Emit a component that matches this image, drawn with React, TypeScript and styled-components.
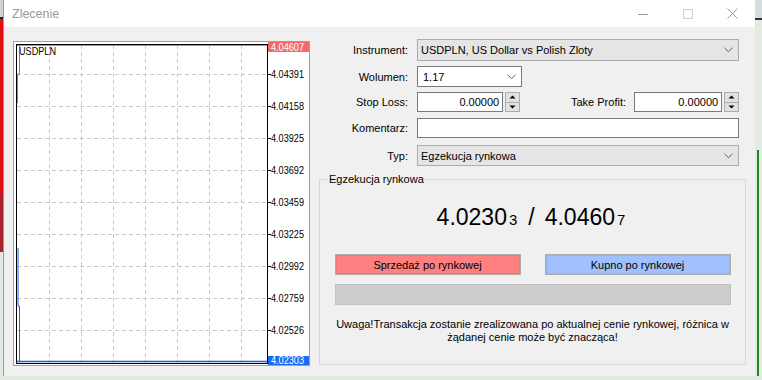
import styled, { createGlobalStyle } from "styled-components";

const GlobalStyle = createGlobalStyle`
  html, body {
    margin: 0;
    padding: 0;
  }
  body {
    width: 762px;
    height: 380px;
    overflow: hidden;
    background: #dfe7df;
    font-family: "Liberation Sans", Arial, sans-serif;
    font-size: 11px;
    color: #000;
  }
`;

const Screen = styled.div`
  width: 762px;
  height: 380px;
  display: flex;
  flex-direction: column;
`;

const Top = styled.div`
  display: flex;
  height: 376px;
`;

const LeftStrip = styled.div`
  width: 4px;
  background: linear-gradient(
    to bottom,
    #cfd3d6 0,
    #cfd3d6 17px,
    #222 17px,
    #222 19px,
    #e01010 19px,
    #e01010 193px,
    #a8222c 193px,
    #a8222c 252px,
    #e1eae1 252px
  );
`;

const RightStrip = styled.div`
  flex: 1;
  background: linear-gradient(
    to bottom,
    #d4dde2 0,
    #d4dde2 18px,
    #333 18px,
    #333 20px,
    #e3ece3 20px
  );
  position: relative;
  &::after {
    content: "";
    position: absolute;
    left: 2px;
    top: 150px;
    bottom: 0;
    width: 2px;
    background: #1b8a1b;
  }
`;

const BottomStrip = styled.div`
  height: 4px;
  background: #e0e8e0;
`;

const Window = styled.div`
  width: 751px;
  display: flex;
  flex-direction: column;
  background: #f0f0f0;
  box-shadow: -1px 0 0 #9a9a9a, 0 1px 0 #b8b8b8;
`;

const TitleBar = styled.div`
  height: 27px;
  background: #fff;
  display: flex;
  align-items: center;
  padding-left: 8px;
`;

const Title = styled.span`
  font-size: 12.5px;
  color: #999;
  flex: 1;
`;

const WinButton = styled.div`
  width: 45px;
  height: 27px;
  display: flex;
  align-items: center;
  justify-content: center;
`;

const Body = styled.div`
  display: flex;
  align-items: flex-start;
  padding: 12px 9px 0 9px;
`;

const ChartBox = styled.div`
  width: 295px;
  height: 323px;
  margin-top: 2px;
  border: 1px solid #a0a0a0;
  background: #fff;
  flex-shrink: 0;
  overflow: hidden;
`;

const Panel = styled.div`
  width: 428px;
  margin-left: 8px;
  display: flex;
  flex-direction: column;
`;

const Row = styled.div<{ $h: number; $mt: number }>`
  display: flex;
  align-items: center;
  height: ${(p) => p.$h}px;
  margin-top: ${(p) => p.$mt}px;
  padding-right: 7px;
`;

const Label = styled.span<{ $w?: number; $mr?: number }>`
  width: ${(p) => p.$w ?? 90}px;
  margin-right: ${(p) => p.$mr ?? 9}px;
  text-align: right;
  flex-shrink: 0;
`;

const Select = styled.div<{ $white?: boolean; $w?: number }>`
  box-sizing: border-box;
  height: 100%;
  ${(p) => (p.$w ? `width: ${p.$w}px;` : "flex: 1;")}
  display: flex;
  align-items: center;
  justify-content: space-between;
  padding: 0 5px 0 ${(p) => (p.$white ? 5 : 3)}px;
  background: ${(p) => (p.$white ? "#fff" : "#e5e5e5")};
  border: 1px solid ${(p) => (p.$white ? "#7a7a7a" : "#adadad")};
`;

const TextBox = styled.div<{ $w?: number }>`
  box-sizing: border-box;
  height: 100%;
  ${(p) => (p.$w ? `width: ${p.$w}px;` : "flex: 1;")}
  display: flex;
  align-items: center;
  justify-content: flex-end;
  padding-right: 3px;
  background: #fff;
  border: 1px solid #7a7a7a;
`;

const Spin = styled.div`
  box-sizing: border-box;
  width: 15px;
  height: 100%;
  margin-left: 2px;
  display: flex;
  flex-direction: column;
  border: 1px solid #adadad;
  background: #e1e1e1;
`;

const SpinHalf = styled.div<{ $top?: boolean }>`
  flex: 1;
  display: flex;
  align-items: center;
  justify-content: center;
  border-bottom: ${(p) => (p.$top ? "1px solid #adadad" : "none")};
`;

const GroupBox = styled.fieldset`
  box-sizing: border-box;
  margin: 6px 0 0 1px;
  padding: 0 15px;
  width: 427px;
  min-width: 0;
  height: 193px;
  border: 1px solid #d9d9d9;
  display: flex;
  flex-direction: column;
  align-items: center;
`;

const Legend = styled.legend`
  margin-left: -7px;
  padding: 0 1px;
  line-height: 14px;
`;

const Price = styled.div`
  margin-top: 17px;
  height: 28px;
  line-height: 28px;
  font-size: 23px;
  white-space: nowrap;
`;

const Small = styled.span`
  font-size: 15px;
  margin: 0 3px 0 2px;
`;

const Sep = styled.span`
  margin: 0 10px 0 8px;
`;

const Buttons = styled.div`
  display: flex;
  gap: 24px;
  margin-top: 23px;
`;

const TradeButton = styled.div<{ $bg: string; $edge: string }>`
  box-sizing: border-box;
  width: 186px;
  height: 21px;
  display: flex;
  align-items: center;
  justify-content: center;
  background: ${(p) => p.$bg};
  border: 1px solid #adadad;
  box-shadow: inset 0 0 0 1px ${(p) => p.$edge};
`;

const Progress = styled.div`
  box-sizing: border-box;
  width: 396px;
  height: 21px;
  margin-top: 9px;
  background: #cccccc;
  border: 1px solid #c2c2c2;
`;

const Warning = styled.div`
  width: 412px;
  flex-shrink: 0;
  margin-top: 13px;
  text-align: center;
  line-height: 13px;
`;

const Chevron = () => (
  <svg width="9" height="6" viewBox="0 0 9 6">
    <polyline points="0.5,0.8 4.5,4.6 8.5,0.8" fill="none" stroke="#606060" strokeWidth="1" />
  </svg>
);

const Arrow = ({ up }: { up?: boolean }) => (
  <svg width="7" height="4" viewBox="0 0 7 4">
    <polygon points={up ? "0.5,3.5 3.5,0.5 6.5,3.5" : "0.5,0.5 3.5,3.5 6.5,0.5"} fill="#000" />
  </svg>
);

const SpinButtons = () => (
  <Spin>
    <SpinHalf $top>
      <Arrow up />
    </SpinHalf>
    <SpinHalf>
      <Arrow />
    </SpinHalf>
  </Spin>
);

const vGrid = [35, 67, 99, 131, 163, 195, 227];
const hGrid = [
  { y: 32, v: "4.04391" },
  { y: 64, v: "4.04158" },
  { y: 96, v: "4.03925" },
  { y: 128, v: "4.03692" },
  { y: 160, v: "4.03459" },
  { y: 192, v: "4.03225" },
  { y: 224, v: "4.02992" },
  { y: 256, v: "4.02759" },
  { y: 288, v: "4.02526" },
];

const Chart = () => (
  <svg width="295" height="323" viewBox="0 0 295 323" fontFamily="Liberation Sans, Arial, sans-serif" fontSize="10.5">
    {vGrid.map((x) => (
      <line key={x} x1={x + 0.5} y1={3} x2={x + 0.5} y2={321} stroke="#c8c8c8" strokeDasharray="4 3" />
    ))}
    {hGrid.map((g) => (
      <g key={g.y}>
        <line x1={3} y1={g.y + 0.5} x2={253} y2={g.y + 0.5} stroke="#c8c8c8" strokeDasharray="4 3" />
        <line x1={254} y1={g.y + 0.5} x2={257} y2={g.y + 0.5} stroke="#000" />
        <text x={257} y={g.y + 4} textLength={33} lengthAdjust="spacingAndGlyphs">
          {g.v}
        </text>
      </g>
    ))}
    <line x1={254} y1={320.5} x2={257} y2={320.5} stroke="#000" />
    <line x1={3} y1={3.5} x2={253} y2={3.5} stroke="#ff7070" />
    <polyline points="5.5,3 5.5,32 3.5,32 3.5,61" fill="none" stroke="#ff5050" />
    <line x1={3} y1={319.5} x2={253} y2={319.5} stroke="#1560f0" strokeWidth="1.5" />
    <polyline points="4,206 4,264 5.5,264 5.5,320" fill="none" stroke="#1560f0" />
    <rect x={2.5} y={2.5} width={251} height={319} fill="none" stroke="#000" />
    <text x={5} y={13} textLength={37} lengthAdjust="spacingAndGlyphs">
      USDPLN
    </text>
    <rect x={254} y={0} width={41} height={10} fill="#f46a6a" />
    <text x={257} y={9} fill="#fff" textLength={33} lengthAdjust="spacingAndGlyphs">
      4.04607
    </text>
    <rect x={254} y={314} width={41} height={9} fill="#1a6cf5" />
    <text x={257} y={322} fill="#fff" fontSize="10" textLength={33} lengthAdjust="spacingAndGlyphs">
      4.02303
    </text>
  </svg>
);

export default function App() {
  return (
    <>
      <GlobalStyle />
      <Screen>
        <Top>
          <LeftStrip />
          <Window>
            <TitleBar>
              <Title>Zlecenie</Title>
              <WinButton>
                <svg width="10" height="10" viewBox="0 0 10 10">
                  <line x1="0" y1="5.5" x2="10" y2="5.5" stroke="#999" />
                </svg>
              </WinButton>
              <WinButton>
                <svg width="10" height="10" viewBox="0 0 10 10">
                  <rect x="0.5" y="0.5" width="9" height="9" fill="none" stroke="#d0d0d0" />
                </svg>
              </WinButton>
              <WinButton>
                <svg width="11" height="11" viewBox="0 0 11 11">
                  <path d="M0.5 0.5 L10.5 10.5 M10.5 0.5 L0.5 10.5" stroke="#999" />
                </svg>
              </WinButton>
            </TitleBar>
            <Body>
              <ChartBox>
                <Chart />
              </ChartBox>
              <Panel>
                <Row $h={22} $mt={0}>
                  <Label>Instrument:</Label>
                  <Select>
                    <span>USDPLN, US Dollar vs Polish Zloty</span>
                    <Chevron />
                  </Select>
                </Row>
                <Row $h={21} $mt={5}>
                  <Label>Wolumen:</Label>
                  <Select $white $w={105}>
                    <span>1.17</span>
                    <Chevron />
                  </Select>
                </Row>
                <Row $h={20} $mt={5}>
                  <Label>Stop Loss:</Label>
                  <TextBox $w={87}>0.00000</TextBox>
                  <SpinButtons />
                  <Label $w={106} $mr={8}>
                    Take Profit:
                  </Label>
                  <TextBox $w={89}>0.00000</TextBox>
                  <SpinButtons />
                </Row>
                <Row $h={20} $mt={6}>
                  <Label>Komentarz:</Label>
                  <TextBox />
                </Row>
                <Row $h={21} $mt={7}>
                  <Label>Typ:</Label>
                  <Select>
                    <span>Egzekucja rynkowa</span>
                    <Chevron />
                  </Select>
                </Row>
                <GroupBox>
                  <Legend>Egzekucja rynkowa</Legend>
                  <Price>
                    4.0230<Small>3</Small>
                    <Sep>/</Sep>4.0460<Small>7</Small>
                  </Price>
                  <Buttons>
                    <TradeButton $bg="#ff8080" $edge="#f47474">
                      Sprzedaż po rynkowej
                    </TradeButton>
                    <TradeButton $bg="#a0c0ff" $edge="#93b4f5">
                      Kupno po rynkowej
                    </TradeButton>
                  </Buttons>
                  <Progress />
                  <Warning>
                    Uwaga!Transakcja zostanie zrealizowana po aktualnej cenie rynkowej, różnica w żądanej cenie
                    może być znacząca!
                  </Warning>
                </GroupBox>
              </Panel>
            </Body>
          </Window>
          <RightStrip />
        </Top>
        <BottomStrip />
      </Screen>
    </>
  );
}
